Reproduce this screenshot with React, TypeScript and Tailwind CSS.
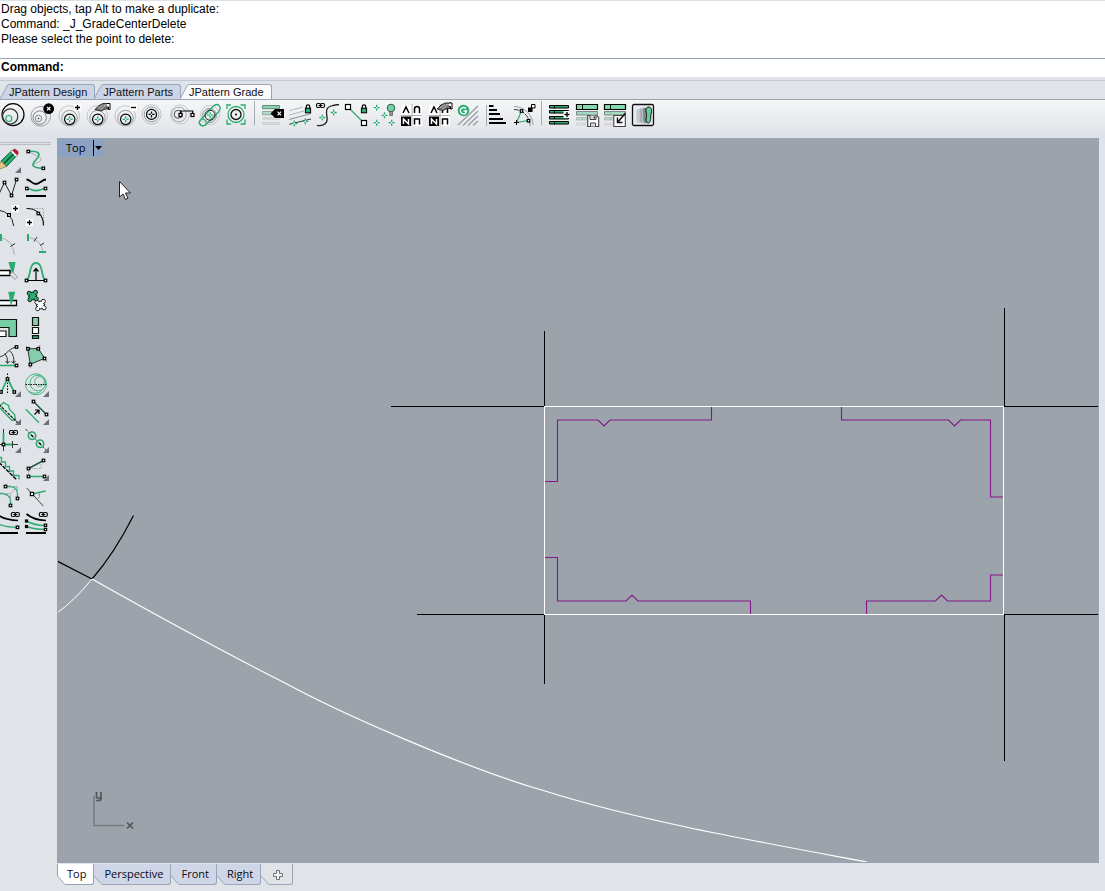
import React from "react";

type Tool = { name: string; art: React.ReactNode; menu?: boolean };

const G = "#2bab70";

/* ---------- shared glyph parts ---------- */
const Node = ({ x, y, s = 3 }: { x: number; y: number; s?: number }) => (
  <rect x={x - s / 2} y={y - s / 2} width={s} height={s} fill="#fff" stroke="#000" strokeWidth="1.2" />
);
const Plus = ({ x, y, r = 2.5, color = "#000" }: { x: number; y: number; r?: number; color?: string }) => (
  <g>
    <rect x={x - 3.5} y={y - 3.5} width="7" height="7" fill="#fff" />
    <path d={`M${x - r} ${y}H${x + r}M${x} ${y - r}V${y + r}`} stroke={color} strokeWidth="1.3" />
  </g>
);
const Spark = ({ x, y, color = G }: { x: number; y: number; color?: string }) => (
  <g>
    <path d={`M${x - 3} ${y}H${x + 3}M${x} ${y - 3}V${y + 3}`} stroke={color} strokeWidth="1.3" />
    <rect x={x - 0.7} y={y - 0.7} width="1.4" height="1.4" fill="#fff" />
  </g>
);
const Lock = ({ x, y }: { x: number; y: number }) => (
  <g>
    <path d={`M${x - 1.7} ${y}v-2.4a1.7 1.7 0 0 1 3.4 0v2.4`} fill="none" stroke="#000" strokeWidth="1.2" />
    <rect x={x - 2.6} y={y - 0.8} width="5.2" height="4.6" fill={G} stroke="#000" />
  </g>
);
const Chain = ({ x, y }: { x: number; y: number }) => (
  <g fill="none" stroke="#000" strokeWidth="1.1">
    <rect x={x - 4} y={y - 2} width="4" height="4" rx="1.4" />
    <rect x={x} y={y - 2} width="4" height="4" rx="1.4" />
    <path d={`M${x - 2} ${y}h4`} />
  </g>
);
const Brush = ({ x, y }: { x: number; y: number }) => (
  <g transform={`translate(${x} ${y})`}>
    <path d="M-8 2.5L-4-1.5 0-3.5H6V2H2L-2 4Z" fill="#777" stroke="#111" strokeWidth="0.8" />
    <path d="M-5 1.5L0-2M-3 3L2-1M1-2H5" stroke="#ddd" strokeWidth="0.6" />
    <path d="M4-3.5H7V2.5H5.5V0H4" fill="#fff" stroke="#000" strokeWidth="1" />
  </g>
);
const Jigsaw = ({ x, y, fill }: { x: number; y: number; fill: string }) => {
  const knobs = (r: number) => (
    <>
      <circle cx="0" cy="-4.6" r={r} />
      <circle cx="4.6" cy="0" r={r} />
      <circle cx="0" cy="4.6" r={r} />
      <circle cx="-4.6" cy="0" r={r} />
    </>
  );
  return (
    <g transform={`translate(${x} ${y}) rotate(38)`}>
      <g fill="#111">
        <path d="M-3.400-3.400H3.400V3.400H-3.400Z" />
        {knobs(2.4)}
      </g>
      <g fill={fill}>
        <path d="M-2.600-2.600H2.600V2.600H-2.600ZM-1-4H1V4H-1ZM-4-1H4V1H-4Z" />
        {knobs(1.6)}
      </g>
    </g>
  );
};
const GradeRings = () => (
  <g fill="none">
    <circle cx="14.3" cy="15" r="10.3" stroke="#c4c6c9" />
    <circle cx="14.5" cy="17" r="7.7" stroke="#989b9f" />
    <circle cx="14.7" cy="18.3" r="5.2" stroke="#000" strokeWidth="1.2" />
    <Spark x={14.7} y={18.3} />
  </g>
);
const Tiles = () => (
  <g fill="none" stroke="#000" strokeWidth="1.5">
    <path d="M3 4h21v21H3Z" fill="#fff" stroke="none" />
    <path d="M14 3v22M3 14.5h21" stroke="#9a9da1" strokeWidth="0.8" />
    <path d="M5 12l3-6 3 6M16.5 12V8a2.5 2.5 0 0 1 5 0v4" />
    <path d="M3 15.5h10v9.5H3Z" fill="#000" stroke="none" />
    <path d="M5.5 23v-5l5 5v-5" stroke="#fff" />
    <path d="M16.5 23.5v-5.5h5v5.5" />
  </g>
);
const Rows = () => (
  <g>
    <path d="M3.500 3.500h21v5h-21Z" fill="#84d8b0" stroke="#000" strokeWidth="1.200" />
    <path d="M9.500 3.500v5" stroke="#000" />
    <path d="M3.500 10.500h21v3.500h-21Z" fill="#9fdcc0" stroke="#7d8a85" />
    <path d="M9.500 10.500v3.500M3.500 16.500h21v2.500h-21ZM9.500 16.500v2.500" fill="#b9dccc" stroke="#a3adaa" strokeWidth="0.700" />
    <path d="M3.500 22h21v2h-21ZM9.500 22v2" fill="none" stroke="#c3c8cb" strokeWidth="0.700" />
  </g>
);

/* ---------- horizontal toolbar ---------- */
const gradeTools: Tool[] = [
  {
    name: "Grade center",
    art: (
      <g fill="none" stroke="#000" strokeWidth="1.2">
        <circle cx="14" cy="13.6" r="11" />
        <circle cx="11.2" cy="15.4" r="7.6" stroke="#333" />
        <circle cx="9.8" cy="17.5" r="3" stroke={G} />
      </g>
    ),
  },
  {
    name: "Delete grade center",
    art: (
      <g fill="none" stroke="#85888c">
        <circle cx="13.7" cy="15.3" r="9.8" stroke="#9fa2a6" />
        <circle cx="12.7" cy="16.6" r="6.7" />
        <circle cx="11.5" cy="17.5" r="3.2" />
        <circle cx="11.5" cy="17.5" r="0.8" fill="#333" stroke="none" />
        <circle cx="21.7" cy="7.7" r="5.4" fill="#000" stroke="none" />
        <path d="M20 6l3.4 3.4M23.4 6L20 9.4" stroke="#fff" strokeWidth="1.2" />
      </g>
    ),
  },
  { name: "Add grade point", art: <g><GradeRings /><Plus x={22.5} y={6.5} /></g> },
  { name: "Copy grade style", art: <g><GradeRings /><Brush x={20} y={6} /></g> },
  {
    name: "Remove grade point",
    art: (
      <g>
        <GradeRings />
        <path d="M19 3h7v7h-7Z" fill="#fff" />
        <path d="M20 6.5h5" stroke="#000" strokeWidth="1.3" />
      </g>
    ),
  },
  {
    name: "Edit grade point",
    art: (
      <g fill="none">
        <circle cx="12.5" cy="13.4" r="9.6" stroke="#bfc2c5" />
        <circle cx="12.5" cy="13.4" r="7.4" stroke="#999ca0" />
        <circle cx="12.5" cy="13.4" r="5" stroke="#000" strokeWidth="1.2" />
        <Spark x={12.5} y={13.4} color="#000" />
      </g>
    ),
  },
  {
    name: "Measure grade",
    art: (
      <g fill="none">
        <circle cx="13" cy="13.5" r="9.5" stroke="#c6c8cb" />
        <circle cx="12" cy="13.5" r="7.3" stroke="#a0a2a4" />
        <circle cx="11.2" cy="13.3" r="4" stroke="#444" />
        <path d="M13.500 13.500v-3.500h12.200v3.500" stroke="#000" strokeWidth="1.2" />
        <Node x={13.500} y={14} />
        <Node x={25.500} y={14} />
      </g>
    ),
  },
  {
    name: "Grade along path",
    art: (
      <g fill="none">
        <circle cx="15" cy="14" r="9.5" stroke="#c4c6c9" />
        <circle cx="14.5" cy="14.5" r="7" stroke="#8b8e91" />
        <path
          d="M6 18.500L18 5.500Q21.500 2 24 4.500T23.500 11L10.500 24Q7 26 5 23.500T6 18.500Z"
          stroke={G}
          strokeWidth="1.300"
        />
        <circle cx="8" cy="21.5" r="3.4" stroke={G} />
        <circle cx="15" cy="14.2" r="5" stroke="#222" />
        <Spark x={15.2} y={14.2} />
      </g>
    ),
  },
  {
    name: "Select all grades",
    art: (
      <g fill="none" stroke={G} strokeWidth="1.3">
        <path d="M4 8V4h4M17.5 4H22v4M22 18.5V23h-4.5M8 23H4v-4.5" />
        <circle cx="13" cy="13.5" r="8" />
        <circle cx="13" cy="13.5" r="5" stroke="#111" />
        <circle cx="13" cy="13.5" r="1" fill="#000" stroke="none" />
      </g>
    ),
  },
];

const lineTools: Tool[] = [
  {
    name: "Clear grade rows",
    art: (
      <g>
        <path d="M4.5 4.5h17v3.2h-17Z" fill="#8acfae" stroke="#5f8f7c" />
        <path d="M4.5 10.5h17v3.2h-17Z" fill="#b4dac9" stroke="#8fa69c" />
        <path d="M4.5 16.5h17v1.8h-17ZM4.5 21.5h17v2h-17Z" fill="#d6dcdb" stroke="#c3c9ca" strokeWidth="0.7" />
        <path d="M12.5 12.5L17 8h9v9h-9Z" fill="#000" />
        <path d="M19.5 10.7l3.6 3.6M23.1 10.7l-3.6 3.6" stroke="#fff" strokeWidth="1.1" />
      </g>
    ),
  },
  {
    name: "Lock grade lines",
    art: (
      <g>
        <path d="M3.3 9.7L17 6M3.3 14L18 10" stroke="#b4b7bb" />
        <path d="M3.3 18.5L25 12.5" stroke="#888b8f" />
        <path d="M3.3 23.2L25 18" stroke="#333" />
        <Spark x={8.3} y={22.5} />
        <Spark x={19.3} y={20.3} />
        <Lock x={22} y={8} />
      </g>
    ),
  },
  {
    name: "Link curve",
    art: (
      <g fill="none">
        <path d="M3 24.300C10 25.500 14 22 13 16S12 6.500 17 5 22 4 25 3.500" stroke="#222" strokeWidth="1.3" />
        <Chain x={6.5} y={4.5} />
        <Spark x={8.3} y={16.5} />
        <Spark x={19.7} y={11.5} />
      </g>
    ),
  },
  {
    name: "Lock segment",
    art: (
      <g>
        <path d="M6 6L22 22" stroke={G} strokeWidth="1.3" />
        <Node x={6} y={6} s={5} />
        <Node x={22} y={22} s={5} />
        <Lock x={22} y={8} />
      </g>
    ),
  },
  {
    name: "Highlight points",
    art: (
      <g>
        <Spark x={6.7} y={6.7} />
        <Spark x={14.5} y={14.3} />
        <Spark x={6.7} y={21.7} />
        <Spark x={21.7} y={21.7} />
        <circle cx="21" cy="7" r="3.8" fill="#79cfa5" stroke="#2c5d48" />
        <path d="M19.7 10.5h2.8v4h-2.8Z" fill="#999" stroke="#555" strokeWidth="0.7" />
      </g>
    ),
  },
  { name: "Notch types", art: <Tiles /> },
  { name: "Copy notch type", art: <g><Tiles /><Brush x={19} y={5.5} /></g> },
  {
    name: "Grade colors",
    art: (
      <g fill="none">
        <path d="M4 24L24 5M9 24.5L24 10M14 24.5L24 15M19 24.5L24 20" stroke="#9b9ea2" strokeWidth="1.3" />
        <circle cx="9.5" cy="9.5" r="5.8" fill={G} />
        <path d="M12 7.7A3.2 3.2 0 1 0 12.7 10H9.5" stroke="#fff" strokeWidth="1.3" />
      </g>
    ),
  },
  {
    name: "Sort sizes",
    art: (
      <g>
        <path d="M4.5 4v21" stroke="#a6abb2" />
        <path d="M7 5h4.5M7 9h8M7 13h11M7 18h14M7 22h17" stroke="#000" strokeWidth="2" />
      </g>
    ),
  },
  {
    name: "Rotate grade",
    art: (
      <g fill="none">
        <path d="M4 5.5A19 19 0 0 1 23 24" stroke="#999ca0" />
        <path d="M4 8.5A16 16 0 0 1 20 24.5" stroke="#333" strokeDasharray="5 1" />
        <path d="M11.5 10L6.5 21.5 18.5 19.5" stroke={G} strokeWidth="1.2" />
        <path d="M4 21.5h5M6.5 19v5" stroke="#000" />
        <Node x={11.5} y={10} s={2.5} />
        <Node x={18.5} y={19.7} s={2.5} />
        <path d="M21.5 3.5h3.5v3.5h-3.5Z" fill="#fff" stroke="#000" />
        <path d="M18 6.5h4.5v4.5H18Z" fill="#000" />
      </g>
    ),
  },
];

const tableTools: Tool[] = [
  {
    name: "Add size row",
    art: (
      <g>
        <path d="M4.500 4.500h19v2.500h-19ZM4.500 9.500h19v2.500h-19ZM4.500 15.500h19v2.500h-19ZM4.500 20.500h19v2.500h-19Z" fill={G} stroke="#000" strokeWidth="1" />
        <path d="M9.500 4v3.500M9.500 9.500v3M9.500 15v3M9.500 20v3.500" stroke="#000" />
        <Plus x={22} y={13.5} />
      </g>
    ),
  },
  {
    name: "Save size table",
    art: (
      <g>
        <Rows />
        <path d="M14.7 14.5h9l2 2v9h-11Z" fill="#fff" stroke="#444" strokeWidth="1.1" />
        <path d="M17 14.5v4h6v-4M17.5 25.5v-3.5h5v3.5" fill="#ddd" stroke="#444" />
        <path d="M21.3 15.5v2" stroke="#222" strokeWidth="1.3" />
      </g>
    ),
  },
  {
    name: "Load size table",
    art: (
      <g>
        <Rows />
        <path d="M12.8 14.5h11.5v11H12.8Z" fill="#fff" stroke="#444" strokeWidth="1.1" />
        <path d="M24.5 12L17 21M16.5 16.5v5h5" fill="none" stroke="#111" strokeWidth="1.5" />
      </g>
    ),
  },
  {
    name: "Show nest",
    art: (
      <g>
        <rect x="3.5" y="3.5" width="21" height="21" rx="1.5" fill="#e7eaee" stroke="#111" strokeWidth="1.3" />
        <path d="M9 8c3-.5 3 3 2.400 6s1 7-1 8-3.500-2-3-6-1.400-7.500 1.600-8Z" fill="#c6cacf" />
        <path d="M12 7c3-.5 3 3 2.400 7s1 7-1 8-3.500-2-3-6-1.400-8.500 1.600-9Z" fill="#a9aeb4" stroke="#d3d6da" strokeWidth="0.600" />
        <path d="M15 6.500c3-.5 3.400 3 2.800 7s1 8-1.200 9-3.500-3-3-7-1.600-8.500 1.400-9Z" fill="#858b91" stroke="#d3d6da" strokeWidth="0.600" />
        <path d="M17 8c.8-2.700 5-2.800 5.500.5.400 3-1 5-.8 7.500.2 3.500-.8 6.200-2.800 6s-2.300-3.500-1.500-6.500S16.300 11 17 8Z" fill="#5fcf9d" stroke="#111" />
      </g>
    ),
  },
];

/* ---------- side toolbar, two tools per row ---------- */
const sideTools: Tool[] = [
  {
    name: "Draw",
    menu: true,
    art: (
      <g>
        <path d="M7 15L18 4.500 23 9.500 12.500 20.500Z" fill={G} stroke="#12633d" />
        <path d="M10 17.500L20.500 7" stroke="#0f5132" strokeWidth="1.300" />
        <path d="M18 5L19.500 3.500Q21 2.500 22.500 4L24 5.500Q25 7 23.500 8.500L22.500 10Z" fill="#c8102e" stroke="#555" strokeWidth="0.600" />
        <path d="M17 5.500L18.200 4.500 23.200 9.500 22 10.700Z" fill="#fff" />
        <path d="M7 15L12.500 20.500 6 23 4.500 21Z" fill="#e6c389" stroke="#80612f" strokeWidth="0.600" />
      </g>
    ),
  },
  {
    name: "Edit curve",
    art: (
      <g fill="none">
        <path d="M6.300 5.500C10 8 18 10 19 13S14 16 10 20" stroke="#a9acb1" />
        <path d="M6.300 5.500C17 4.500 19 8 15 12.500S6 22 21.300 22.300" stroke={G} strokeWidth="1.600" />
        <Node x={6.300} y={5.500} s={2.500} />
        <Node x={21.300} y={22.300} s={2.500} />
      </g>
    ),
  },
  {
    name: "Polyline",
    art: (
      <g fill="none">
        <path d="M5 20L10.500 8.500 17.500 21.500 22.500 5.500" stroke="#222" />
        <Node x={10.500} y={8.500} s={2.500} />
        <Node x={17.500} y={21.500} s={2.500} />
        <Node x={22.500} y={5.500} s={2.500} />
      </g>
    ),
  },
  {
    name: "Parallel curve",
    art: (
      <g fill="none">
        <path d="M4.500 5.500C8 5.500 10 10 14 10s6-4.500 10-4.500" stroke="#000" strokeWidth="1.800" />
        <path d="M4.500 14.500c4 0 5 2.200 9.500 2.200s6-2.200 9.500-2.200" stroke={G} strokeWidth="1.700" />
        <path d="M4 22h20" stroke="#000" strokeWidth="2" />
        <Node x={4.800} y={14.500} s={2.500} />
        <Node x={23.500} y={14.500} s={2.500} />
      </g>
    ),
  },
  {
    name: "Add point",
    art: (
      <g fill="none">
        <path d="M4 8Q18 10 19.700 24" stroke="#222" />
        <Node x={15} y={13} s={2.800} />
        <Plus x={21.500} y={6.500} />
      </g>
    ),
  },
  {
    name: "Move point",
    art: (
      <g fill="none">
        <path d="M5 6.500H21.500V23" stroke="#888" strokeDasharray="1 1.500" />
        <path d="M4.500 6.500C15 6.500 21.500 13 21.500 23.500" stroke="#111" strokeWidth="1.200" />
        <Node x={16.300} y={11.500} s={2.500} />
        <Plus x={7.500} y={20.500} />
      </g>
    ),
  },
  {
    name: "Trim start",
    art: (
      <g fill="none">
        <path d="M5 7.500Q19 9 20.300 24.500" stroke="#a9acb1" />
        <path d="M16.500 16.500L21 13.500" stroke="#222" />
        <path d="M7 4v7" stroke={G} strokeWidth="2" />
      </g>
    ),
  },
  {
    name: "Divide curve",
    art: (
      <g fill="none">
        <path d="M6 7.300Q19 9 21 22" stroke="#a9acb1" />
        <path d="M12 11.500L15 7M18 15.500L22 13" stroke="#333" />
        <path d="M6 4v7M17 22h7" stroke={G} strokeWidth="2" />
      </g>
    ),
  },
  {
    name: "Erase seam",
    art: (
      <g>
        <path d="M4 12.500h12v5H4Z" fill="#fff" stroke="#000" strokeWidth="1.500" />
        <path d="M14.300 4H21.500l-2.500 14Z" fill={G} />
        <path d="M18.500 14l5 5-2.500 2.500-5-5Z" fill="#e0e2e4" stroke="#999" />
      </g>
    ),
  },
  {
    name: "Adjust height",
    art: (
      <g fill="none">
        <path d="M4.500 22.500h19M14 22V10.500M11.500 13.500L14 10.500l2.500 3" stroke="#000" strokeWidth="1.200" />
        <path d="M5 22C9 18 7 5 14 5s5 13 9 17" stroke={G} strokeWidth="1.800" />
        <Node x={4.500} y={22.500} s={2.500} />
        <Node x={23.500} y={22.500} s={2.500} />
      </g>
    ),
  },
  {
    name: "Cut seam",
    art: (
      <g>
        <path d="M4 14.500h18.500v5H4Z" fill="#fff" stroke="#000" strokeWidth="1.300" />
        <path d="M14.300 5.700H21.300L17 20.500Z" fill={G} />
      </g>
    ),
  },
  {
    name: "Join parts",
    art: (
      <g>
        <Jigsaw x={18.500} y={19} fill="#fff" />
        <Jigsaw x={10.700} y={10} fill={G} />
      </g>
    ),
  },
  {
    name: "Corner piece",
    art: (
      <g>
        <path d="M4 5.500h18.500v17H15v-9H4Z" fill="#77cfa5" stroke="#111" strokeWidth="1.200" />
        <path d="M4 17h8v5.500H4Z" fill="#fff" stroke="#111" strokeWidth="1.200" />
      </g>
    ),
  },
  {
    name: "Split piece",
    art: (
      <g stroke="#111" strokeWidth="1.200">
        <path d="M10.500 3.500h6v8h-6Z" fill="#86cdab" />
        <path d="M10.500 13.500h6v6h-6Z" fill="#fff" />
        <path d="M10.500 21.700h6v2.800h-6Z" fill={G} />
      </g>
    ),
  },
  {
    name: "Project curve",
    art: (
      <g fill="none">
        <path d="M4 15C12 15 13 7 22 5M11 11.500q3 4 2.500 9.500M16 9q5 5 3.500 12M11.500 19l2 2.500 2-2.500M17.500 19l2 2.500 2-2.500" stroke="#333" />
        <path d="M4 23.500h18.500" stroke={G} strokeWidth="1.500" />
        <Node x={22.500} y={5} s={2.500} />
        <Node x={22.500} y={23.500} s={2.500} />
      </g>
    ),
  },
  {
    name: "Surface piece",
    art: (
      <g>
        <path d="M5.700 6.700H16.300L22.700 16.300 8.300 22.300Z" fill="#86cdab" stroke="#333" />
        <path d="M4 4l2 3M16 7l2-4M22.700 16.300L25 20M8.300 22.300L8 26" stroke="#888" />
        <Node x={6} y={6.800} s={2.500} />
        <Node x={16.300} y={6.800} s={2.500} />
        <Node x={22.500} y={16.500} s={2.500} />
        <Node x={8.300} y={22.500} s={2.500} />
      </g>
    ),
  },
  {
    name: "Dart",
    menu: true,
    art: (
      <g fill="none">
        <path d="M4 22.500h4M19 22.500h3" stroke="#000" strokeWidth="1.500" />
        <path d="M7.500 21.500L13.500 8.500 20 21.500" stroke={G} strokeWidth="1.700" />
        <path d="M13.500 3.500v20" stroke="#000" strokeDasharray="1.500 1.500" />
        <Node x={13.500} y={9} s={2.500} />
        <Node x={7} y={22} s={2.500} />
        <Node x={20.300} y={22} s={2.500} />
      </g>
    ),
  },
  {
    name: "Concentric circles",
    menu: true,
    art: (
      <g fill="none" stroke="#49b683">
        <circle cx="14" cy="14.300" r="10.500" />
        <circle cx="15.800" cy="13" r="7.800" />
        <circle cx="17.500" cy="11.500" r="4.800" />
        <path d="M7 21a9 9 0 0 0 13-1" />
        <path d="M3.500 14.500h21" stroke="#111" strokeDasharray="1.500 1" />
      </g>
    ),
  },
  {
    name: "Pleat",
    menu: true,
    art: (
      <g fill="none">
        <path d="M6 8l3.500-3.500 5 3 1 4 5 5 1 5-3.500 1L6 10" stroke={G} strokeWidth="1.300" fill="#dce9e4" />
        <path d="M5 6.500L25 26" stroke="#111" strokeWidth="1.200" strokeDasharray="3 1" />
      </g>
    ),
  },
  {
    name: "Offset line",
    menu: true,
    art: (
      <g fill="none">
        <path d="M3.700 11.300L17 24.700" stroke={G} strokeWidth="1.300" />
        <path d="M11.500 3.500L24.500 16.500" stroke="#1e5b41" strokeWidth="1.500" />
        <path d="M12.500 16.500L16.500 12.500M13 12h4v4" stroke="#000" strokeWidth="1.200" />
        <Node x={11.500} y={3.500} s={2.500} />
        <Node x={24.500} y={16.500} s={2.500} />
      </g>
    ),
  },
  {
    name: "Linked corner",
    menu: true,
    art: (
      <g fill="none">
        <path d="M9.500 3v4M9.500 18v7M4 18.500h5M18 18.500h6M18.500 15v7" stroke="#333" />
        <path d="M9.500 7v11M10 18.500h8" stroke={G} strokeWidth="1.800" />
        <Node x={9.500} y={18.500} s={2.500} />
        <Chain x={19.500} y={6.500} />
      </g>
    ),
  },
  {
    name: "Buttons along line",
    menu: true,
    art: (
      <g fill="none">
        <path d="M3.500 3L26 26" stroke="#333" strokeDasharray="3 1" />
        <circle cx="10" cy="9.700" r="3.700" stroke={G} strokeWidth="1.600" />
        <circle cx="18" cy="17.700" r="3.700" stroke={G} strokeWidth="1.600" />
        <path d="M9 8.700l2 2M17 16.700l2 2" stroke="#000" strokeWidth="1.500" />
      </g>
    ),
  },
  {
    name: "Steps",
    art: (
      <g fill="none">
        <path d="M5 3.500h2.500v4.500h4v4.500h4v4.500h4v4.500h5.500v4" stroke={G} strokeWidth="1.300" />
        <path d="M5 8.500L22.500 25.500" stroke="#000" strokeWidth="1.400" strokeDasharray="4 1" />
      </g>
    ),
  },
  {
    name: "Match length",
    menu: true,
    art: (
      <g fill="none">
        <path d="M6.500 14.500v8M7 14.500h12V9" stroke="#a4a7ab" strokeDasharray="1.500 1" />
        <path d="M6.500 14.500L21.500 6.500" stroke="#1e5b41" strokeWidth="1.500" />
        <path d="M6.500 22.500h16" stroke={G} strokeWidth="1.500" />
        <Node x={6.500} y={14.500} s={2.500} />
        <Node x={21.500} y={6.500} s={2.500} />
        <Node x={6.500} y={22.500} s={2.500} />
        <Node x={22.500} y={22.500} s={2.500} />
      </g>
    ),
  },
  {
    name: "Round corner",
    art: (
      <g fill="none">
        <path d="M12 4.500h5q6 1 6.500 7v5M4 11.500h5q6 1 7.500 6v5" stroke={G} strokeWidth="1.300" />
        <path d="M17 4.500h6.500v6.500M16.500 11.500v6M9 11.500h7.500l6-6" stroke="#a4a7ab" strokeWidth="0.800" />
        <Node x={11.500} y={4.500} s={2.500} />
        <Node x={23.500} y={16.500} s={2.500} />
        <Node x={16.500} y={23.500} s={2.500} />
      </g>
    ),
  },
  {
    name: "Angle",
    art: (
      <g fill="none">
        <path d="M4.700 6L21.300 24" stroke="#444" />
        <path d="M17 10.500q2 4-1.500 7" stroke="#8d9094" />
        <path d="M10 12L23.700 9" stroke={G} strokeWidth="1.500" />
        <Node x={10} y={12} s={3.200} />
      </g>
    ),
  },
  {
    name: "Linked offset",
    art: (
      <g fill="none">
        <path d="M4 5q7 5 20 5.500" stroke="#000" strokeWidth="1.700" />
        <path d="M4 14q8 3.300 19.500 3.300" stroke={G} strokeWidth="1.500" />
        <path d="M4 23h20" stroke="#000" strokeWidth="2" />
        <Node x={23.500} y={17.300} s={2.500} />
        <Chain x={21.300} y={4.500} />
      </g>
    ),
  },
  {
    name: "Linked offsets",
    art: (
      <g fill="none">
        <path d="M4.500 4q7 6 19.500 6.500" stroke="#000" strokeWidth="1.700" />
        <path d="M4.500 11q8 4.500 19 4.500M4.500 16.500q8 3 19 3" stroke={G} strokeWidth="1.500" />
        <path d="M4 23h20" stroke="#000" strokeWidth="2" />
        <Node x={4.500} y={11} s={2} />
        <Node x={4.500} y={16.500} s={2} />
        <Node x={23.500} y={15.300} s={2.300} />
        <Node x={23.500} y={19.500} s={2.300} />
        <Chain x={21.300} y={4.500} />
      </g>
    ),
  },
];

function ToolButton({ tool }: { tool: Tool }) {
  return (
    <button type="button" aria-label={tool.name} className="block size-7 shrink-0">
      <svg viewBox="0 0 28 28" className="size-7" aria-hidden="true">
        {tool.art}
        {tool.menu && <path d="M27 21v6H21Z" fill="#6d7176" />}
      </svg>
    </button>
  );
}

function ToolGroup({ tools, label }: { tools: Tool[]; label: string }) {
  return (
    <div role="group" aria-label={label} className="flex">
      {tools.map((t) => (
        <ToolButton key={t.name} tool={t} />
      ))}
    </div>
  );
}

const Divider = () => <div className="mx-[3px] h-6 w-px bg-[#a6abb2]" />;

function TopTab({ label, active }: { label: string; active?: boolean }) {
  const fill = active ? "#fafafa" : "#ccd5e6";
  return (
    <button type="button" role="tab" aria-selected={!!active} className="-mr-px flex h-[15px]">
      <svg viewBox="0 0 9 15" className="h-[15px] w-[9px]" aria-hidden="true">
        <path d="M0 15L7 2Q8 .5 9 .5V15Z" fill={fill} />
        <path d="M0 15L7 2Q8 .5 9 .5" fill="none" stroke="#98a5b8" />
      </svg>
      <span
        className={
          "h-[15px] rounded-tr-[3px] border-t border-r border-[#98a5b8] pr-[7px] text-[11px] leading-[15px] text-[#101018] " +
          (active ? "bg-[#fafafa]" : "bg-[#ccd5e6]")
        }
      >
        {label}
      </span>
    </button>
  );
}

function ViewTab({ label, active, children }: { label: string; active?: boolean; children?: React.ReactNode }) {
  const plain = !!children;
  const fill = active ? "#ffffff" : plain ? "#e0e3e8" : "#ced6e8";
  return (
    <button type="button" role="tab" aria-selected={!!active} aria-label={label} className="flex h-[21px]">
      <svg viewBox="0 0 10 21" className="h-[21px] w-[10px]" aria-hidden="true">
        <path d="M0 0H10V20.500H8L0 12Z" fill={fill} />
        <path d={active ? "M.5 0V12L8 20.500H10" : "M0 12L8 20.500H10"} fill="none" stroke="#98a5b8" />
      </svg>
      <span
        className={
          "flex h-[21px] items-center rounded-br-[3px] border-r border-b border-[#98a5b8] pr-[7px] pt-px text-[11px] text-[#0a0a14] " +
          (active ? "bg-white" : plain ? "bg-[#e0e3e8]" : "bg-[#ced6e8]")
        }
      >
        {children ?? label}
      </span>
    </button>
  );
}

function Drawing() {
  return (
    <svg className="absolute inset-0 size-full" role="img" aria-label="Pattern drawing">
      <g transform="translate(-58 -139)" fill="none" strokeWidth="1">
        <path
          d="M391 406.500H544M1004 406.500H1098M417 614.500H544M1004 614.500H1098M544.500 331V406M1004.500 308V406M544.500 615V684M1004.500 615V761"
          stroke="#000"
        />
        <path d="M57 561L92 579M133.500 515.500Q114 554 92 579" stroke="#000" strokeWidth="1.200" />
        <path d="M92 579Q74 601 57 613" stroke="#fff" />
        <path
          d="M92 579C154 614 220 650 285 683C340 713 465 768 545 791C640 821 760 842 867 862"
          stroke="#fff"
          strokeWidth="1.200"
        />
        <path d="M544.500 406.500H1003.500V614.500H544.500Z" stroke="#fff" />
        <g stroke="#85178a" strokeWidth="1.100">
          <path d="M545 481.500H557.500V420H598L604 426 610 420H711.500V407" />
          <path d="M841.500 407V420H948.500L954.500 426 960.500 420H990.500V497H1003" />
          <path d="M545 557.500H557.500V601H626L632 595 638 601H750.500V614" />
          <path d="M866.500 614V601H935.500L941.500 595 947.500 601H990.500V575H1003" />
        </g>
        <path d="M94 796V825.500H124" stroke="#777b7f" strokeWidth="1.500" />
        <path d="M96.500 792v4.500q0 1.500 2 1.500h2.500M101 792v6.500q0 2-2 2h-3" stroke="#53575b" strokeWidth="1.700" />
        <path d="M127 822.500l6 6M133 822.500l-6 6" stroke="#53575b" strokeWidth="1.700" />
      </g>
      <path
        d="M61.500 42.500V58L65 55 67.500 60.500 70 59.300 67.500 54H72.500Z"
        fill="#fff"
        stroke="#222"
      />
    </svg>
  );
}

export default function App() {
  return (
    <div className="flex min-h-screen flex-col overflow-hidden bg-[#e0e3e8] font-['Liberation_Sans',sans-serif] text-black">
      <section aria-label="Command history" className="h-[58px] border-t border-[#dcdfe4] bg-white pt-px pl-px text-[12px] leading-[15px]">
        <p>Drag objects, tap Alt to make a duplicate:</p>
        <p>Command: _J_GradeCenterDelete</p>
        <p>Please select the point to delete:</p>
      </section>
      <div className="flex h-[19px] items-center border-t border-[#98a5b8] bg-white pb-0.5 pl-px text-[12px] leading-4">
        <label htmlFor="command" className="font-bold">Command:</label>
        <input id="command" type="text" className="ml-1 h-4 min-w-0 flex-1 bg-transparent outline-none" />
      </div>

      <div role="tablist" aria-label="Toolbars" className="mt-[3px] flex h-5 items-end border-t border-b border-t-[#c0cad7] border-b-[#98a5b2]">
        <TopTab label="JPattern Design" />
        <TopTab label="JPattern Parts" />
        <TopTab label="JPattern Grade" active />
      </div>

      <div className="-ml-px flex h-[38px] items-start bg-linear-to-b from-[#f5f6f7] to-[#dee1e7] pt-px">
        <ToolGroup tools={gradeTools} label="Grade points" />
        <Divider />
        <ToolGroup tools={lineTools} label="Grade lines" />
        <Divider />
        <ToolGroup tools={tableTools} label="Size table" />
      </div>

      <div className="flex flex-1">
        <aside className="w-[57px] shrink-0 overflow-hidden">
          <div className="mt-1 mr-[6px] mb-px h-[3px] border-y border-[#b9bdc4]" />
          <div className="-ml-[6px] grid w-14 grid-cols-2">
            {sideTools.map((t) => (
              <ToolButton key={t.name} tool={t} />
            ))}
          </div>
        </aside>

        <div className="mr-[6px] flex min-w-0 flex-1 flex-col">
          <main className="relative flex-1 overflow-hidden border border-[#99a5b4] bg-[#9da3aa]">
            <Drawing />
            <button
              type="button"
              className="relative flex h-[18px] items-center bg-[#8ca2c3] pl-2 font-['Open_Sans',sans-serif] text-[11px]"
            >
              Top
              <span className="ml-2 h-4 w-px bg-black" />
              <svg viewBox="0 0 9 6" className="mr-px h-[6px] w-[9px]" aria-hidden="true">
                <path d="M1 1H8L4.500 5Z" fill="#000" />
              </svg>
            </button>
          </main>
          <div role="tablist" aria-label="Views" className="flex h-7 items-start pt-px font-['Open_Sans',sans-serif]">
            <ViewTab label="Top" active />
            <ViewTab label="Perspective" />
            <ViewTab label="Front" />
            <ViewTab label="Right" />
            <ViewTab label="Add view">
              <svg viewBox="0 0 14 14" className="size-[14px]" aria-hidden="true">
                <path d="M5.500 2.500h3v3h3v3h-3v3h-3v-3h-3v-3h3Z" fill="#eef0f2" stroke="#6d7176" />
              </svg>
            </ViewTab>
          </div>
        </div>
      </div>
    </div>
  );
}
